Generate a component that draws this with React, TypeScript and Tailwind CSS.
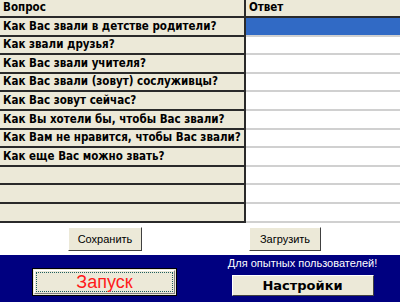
import React from "react";

const questions = [
  "Как Вас звали в детстве родители?",
  "Как звали друзья?",
  "Как Вас звали учителя?",
  "Как Вас звали (зовут) сослуживцы?",
  "Как Вас зовут сейчас?",
  "Как Вы хотели бы, чтобы Вас звали?",
  "Как Вам не нравится, чтобы Вас звали?",
  "Как еще Вас можно звать?",
  "",
  "",
  "",
];

const heights = [19, 18, 19, 18, 19, 19, 18, 19, 18, 19, 19];

const gridFont = { fontFamily: '"DejaVu Sans Condensed", "DejaVu Sans", sans-serif' };
const uiFont = { fontFamily: '"Liberation Sans", Arial, sans-serif' };

export default function App() {
  return (
    <div className="w-[400px] h-[302px] flex flex-col bg-white overflow-hidden">
      {/* grid */}
      <div className="flex flex-col" style={gridFont}>
        <div className="flex h-[18px]">
          <div className="w-[246px] bg-[#ECE9D8] border-b-2 border-r-2 border-[#2a2a2a] flex items-center pl-[3px] text-[11.5px] font-bold text-black">
            Вопрос
          </div>
          <div className="flex-1 bg-[#ECE9D8] border-b-2 border-[#2a2a2a] flex items-center pl-[3px] text-[11.5px] font-bold text-black">
            Ответ
          </div>
        </div>
        {questions.map((q, i) => (
          <div key={i} className="flex" style={{ height: heights[i] }}>
            <div className="w-[246px] bg-[#ECE9D8] border-b-2 border-r-2 border-[#2a2a2a] flex items-center pl-[3px] text-[11.5px] font-bold text-black whitespace-nowrap overflow-hidden">
              {q}
            </div>
            <div
              className={
                i === 0
                  ? "flex-1 bg-[#316AC5] border-b-2 border-[#d0d0d0]"
                  : "flex-1 bg-white border-b-2 border-[#d0d0d0]"
              }
            />
          </div>
        ))}
      </div>

      {/* save / load */}
      <div className="h-[32px] flex items-center" style={uiFont}>
        <div className="ml-[68px] w-[74px] h-[24px] bg-[#ECE9D8] border border-t-white border-l-white border-r-[#404040] border-b-[#404040] flex items-center justify-center text-[11px] text-black">
          Сохранить
        </div>
        <div className="ml-[107px] w-[72px] h-[24px] bg-[#ECE9D8] border border-t-white border-l-white border-r-[#404040] border-b-[#404040] flex items-center justify-center text-[11px] text-black">
          Загрузить
        </div>
      </div>

      {/* navy panel */}
      <div className="flex-1 bg-[#000080] flex" style={uiFont}>
        <div className="ml-[32px] mt-[13px] w-[145px] h-[28px] border border-black bg-[#ECE9D8] p-[1px]">
          <div className="w-full h-full border border-t-white border-l-white border-r-[#808080] border-b-[#808080] p-[1px]">
            <div className="w-full h-full border border-dotted border-[#1f5f5f] flex items-center justify-center text-[18px] text-[#ff1a1a] leading-none pb-[1px]">
              Запуск
            </div>
          </div>
        </div>
        <div className="ml-[52px] w-[147px] flex flex-col items-center">
          <div className="mt-[1px] h-[14px] text-[11px] text-white leading-[14px] whitespace-nowrap">
            Для опытных пользователей!
          </div>
          <div
            className="mt-[5px] w-[142px] h-[21px] bg-[#ECE9D8] border border-t-white border-l-white border-r-[#404040] border-b-[#404040] flex items-center justify-center text-[13px] font-bold text-black"
            style={{ fontFamily: '"DejaVu Sans", sans-serif' }}
          >
            Настройки
          </div>
        </div>
      </div>
    </div>
  );
}
